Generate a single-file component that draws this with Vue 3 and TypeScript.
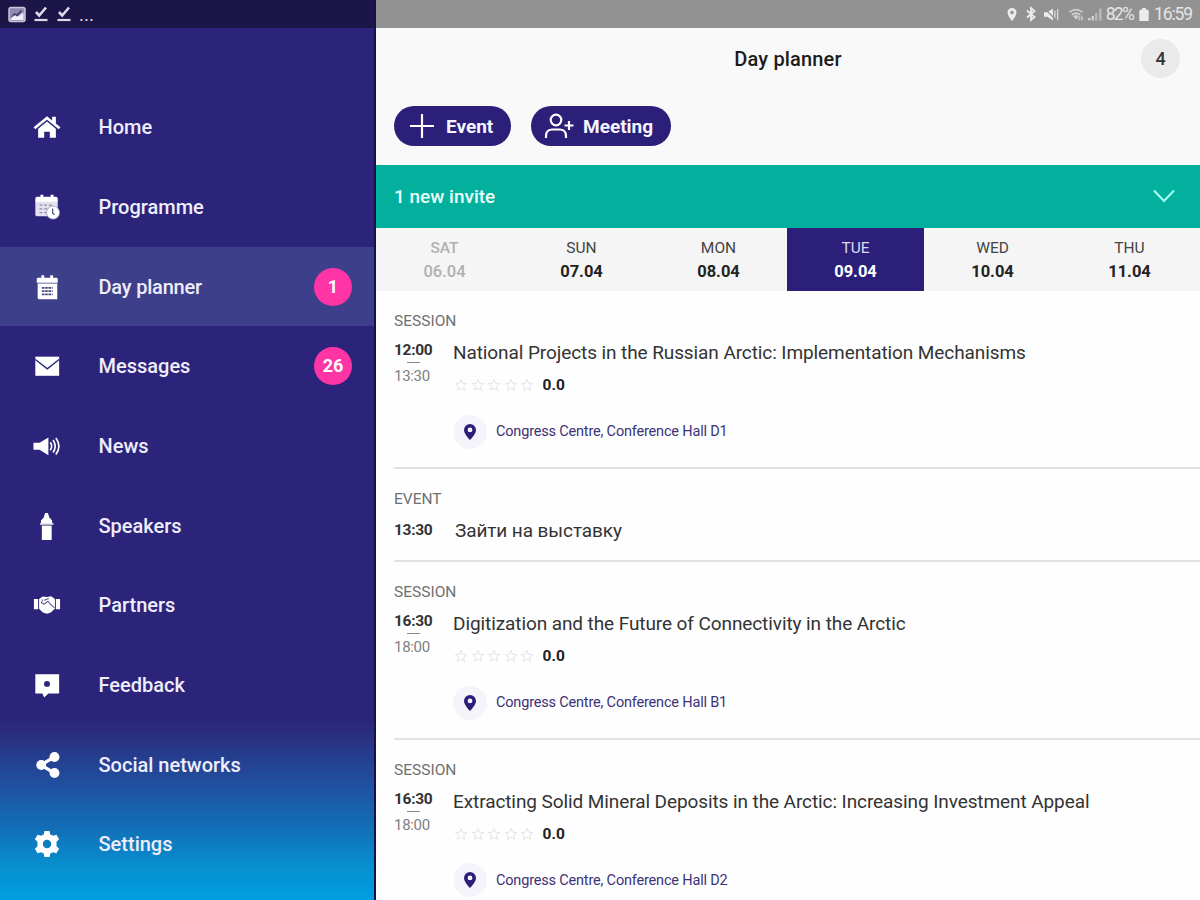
<script setup lang="ts">
interface MenuItem {
  icon: string;
  label: string;
  badge?: number;
  active?: boolean;
}

interface Day {
  name: string;
  date: string;
  state?: "past" | "selected";
}

interface Entry {
  kind: "session" | "event";
  start: string;
  end?: string;
  title: string;
  rating?: string;
  place?: string;
}

const menu: MenuItem[] = [
  { icon: "home", label: "Home" },
  { icon: "programme", label: "Programme" },
  { icon: "planner", label: "Day planner", badge: 1, active: true },
  { icon: "messages", label: "Messages", badge: 26 },
  { icon: "news", label: "News" },
  { icon: "speakers", label: "Speakers" },
  { icon: "partners", label: "Partners" },
  { icon: "feedback", label: "Feedback" },
  { icon: "social", label: "Social networks" },
  { icon: "settings", label: "Settings" }
];

const days: Day[] = [
  { name: "SAT", date: "06.04", state: "past" },
  { name: "SUN", date: "07.04" },
  { name: "MON", date: "08.04" },
  { name: "TUE", date: "09.04", state: "selected" },
  { name: "WED", date: "10.04" },
  { name: "THU", date: "11.04" }
];

const entries: Entry[] = [
  {
    kind: "session",
    start: "12:00",
    end: "13:30",
    title: "National Projects in the Russian Arctic: Implementation Mechanisms",
    rating: "0.0",
    place: "Congress Centre, Conference Hall D1"
  },
  { kind: "event", start: "13:30", title: "Зайти на выставку" },
  {
    kind: "session",
    start: "16:30",
    end: "18:00",
    title: "Digitization and the Future of Connectivity in the Arctic",
    rating: "0.0",
    place: "Congress Centre, Conference Hall B1"
  },
  {
    kind: "session",
    start: "16:30",
    end: "18:00",
    title: "Extracting Solid Mineral Deposits in the Arctic: Increasing Investment Appeal",
    rating: "0.0",
    place: "Congress Centre, Conference Hall D2"
  }
];
</script>

<template>
  <div class="screen">
    <aside class="sidebar">
      <div class="status status-left">
        <svg class="status-image" viewBox="0 0 18 16">
          <rect x="1" y="1" width="16" height="14" rx="2" fill="#8f8bb0" stroke="#c9c6dc" stroke-width="1.5" />
          <path d="M2.5 12.5 7 8.500l3 1.500 5.500-4v7.500h-13z" fill="#f1f0fa" />
          <path d="M3 10.500 6.500 6.500l2 1.500L13 3.500l1 1-5 5.500-2-1.500z" fill="#3d3767" />
        </svg>
        <svg v-for="n in 2" :key="n" class="status-check" viewBox="0 0 14 16">
          <path d="m2 6 3.200 3.500L12 1.500" fill="none" stroke="#dcdaea" stroke-width="2.600" />
          <path d="M.5 14h13" stroke="#dcdaea" stroke-width="2.200" />
        </svg>
        <span class="status-more">...</span>
      </div>

      <nav class="menu">
        <a v-for="item in menu" :key="item.label" class="menu-item" :class="{ active: item.active }">
          <svg class="menu-icon" viewBox="0 0 30 30">
            <g v-if="item.icon === 'home'">
              <path d="M15 9 24.500 17V26.500H18V20h-6v6.500H5.500V17z" />
              <path d="M1.500 16.300 15 5.300l13.500 11" fill="none" stroke="#fff" stroke-width="2.800" />
              <path d="M20.500 4h4v8l-4-3.500z" />
              <path d="M4.500 17.300 15 8.700l10.500 8.600" fill="none" stroke="#5d578f" stroke-width=".7" />
            </g>
            <g v-else-if="item.icon === 'programme'">
              <path d="M4.500 4H8V2h3v2h8V2h3v2h2.500a2 2 0 0 1 2 2v4h-24V6a2 2 0 0 1 2-2z" />
              <path d="M2.500 9.500h24V25h-22a2 2 0 0 1-2-2z" fill="#e3e1ee" />
              <path d="M7 13h3m2 0h3m2 0h3M7 17h3m2 0h3M7 21h3m2 0h3" stroke="#8f8bb0" stroke-width="1.500" />
              <circle cx="21.500" cy="21" r="7" stroke="#8d89b1" stroke-width=".7" />
              <path d="M21 16.500v5l2 2" fill="none" stroke="#4c4687" stroke-width="1.300" />
            </g>
            <g v-else-if="item.icon === 'planner'">
              <path d="M5.500 5H9V2.500h3V5h6.500V2.500h3V5h3.500a1.500 1.500 0 0 1 1.500 1.500V10.500H4V6.500A1.500 1.500 0 0 1 5.500 5zM5 11.300h21V28H6.500A1.500 1.500 0 0 1 5 26.500z" />
              <path d="M9.500 16h11.500M9.500 19.500h11.500M9.500 23h11.500" stroke="#4c4687" stroke-width="1.900" stroke-dasharray="2.800 .7" />
            </g>
            <g v-else-if="item.icon === 'messages'">
              <path d="M2.500 5h25.500v20.500H2.500z" />
              <path d="m2.500 8 12.800 10L28 8" fill="none" stroke="#2c247a" stroke-width="1.500" />
            </g>
            <g v-else-if="item.icon === 'news'">
              <path d="M.5 11.500h7V19h-7zM7 11.500l9.500-5.500v19L7 19z" />
              <path d="M18.500 11q3 4.300 0 8.500M21.500 8.500q4.500 6.800 0 13.500M24.500 6.500q6.500 8.800 0 17.500" fill="none" stroke="#fff" stroke-width="1.800" />
            </g>
            <g v-else-if="item.icon === 'speakers'">
              <path d="M13 1h3l1.500 5 3 3v4h-12V9l3-3zM9.500 14.500h10.500V30H9.500z" />
              <path d="M7.500 12.800h14.500" stroke="#e5e3f0" stroke-width="1.800" />
              <path d="M9 14.200h11.500" stroke="#76709f" stroke-width=".7" />
            </g>
            <g v-else-if="item.icon === 'partners'">
              <path d="M1 8.500h4.500v11H1zM24.500 8.500H29v11h-4.500zM6.500 8.500l4-2.500 4.500.5L19.500 5.500l4 3v10.500l-4.500 4-4 1.500-4.500-1.500-4-4z" />
              <path d="M10.500 9 9 12.500l3 1.500 4-3 2.500 3 4.500 4M17 8l-5 2" fill="none" stroke="#5d578f" stroke-width="1.100" />
            </g>
            <g v-else-if="item.icon === 'feedback'">
              <path d="M2.500 3.500H28v20.500H16.500L12 28.500 10 24H2.500z" />
              <circle cx="15" cy="13.800" r="3.200" fill="#2c247a" />
            </g>
            <g v-else-if="item.icon === 'social'">
              <path d="M22.500 6.500 8.500 15l14 8.500" fill="none" stroke="#fff" stroke-width="3.600" />
              <circle cx="23" cy="6.500" r="5.300" />
              <circle cx="8.800" cy="15" r="5.300" />
              <circle cx="23" cy="23.500" r="5.300" />
            </g>
            <g v-else>
              <path
                fill-rule="evenodd"
                d="M12.300 1h5.400l.8 3.700q1.500.5 2.700 1.400l3.900-1.100 2.900 4.900-2.800 2.600v5l2.800 2.600-2.900 4.900-3.900-1.100q-1.200.9-2.700 1.400l-.8 3.700h-5.400l-.8-3.700q-1.500-.5-2.700-1.400L4.900 25 2 20.100l2.800-2.600v-5L2 9.900 4.900 5l3.900 1.100Q10 5.200 11.500 4.700zM15 10.500a4.500 4.500 0 1 0 0 9 4.500 4.500 0 0 0 0-9z"
              />
            </g>
          </svg>
          <span class="menu-label">{{ item.label }}</span>
          <span v-if="item.badge" class="menu-badge">{{ item.badge }}</span>
        </a>
      </nav>
    </aside>

    <main class="content">
      <div class="status status-right">
        <svg class="status-pin" viewBox="0 0 12 16">
          <path fill-rule="evenodd" d="M6 1a4.800 4.800 0 0 0-4.800 4.800C1.200 9.500 6 15 6 15s4.800-5.500 4.800-9.200A4.800 4.800 0 0 0 6 1zm0 2.900a1.900 1.900 0 1 1 0 3.800 1.900 1.900 0 0 1 0-3.800z" />
        </svg>
        <svg class="status-bluetooth" viewBox="0 0 12 16">
          <path d="m2 4.500 7.500 6.500L6 14V2l3.500 3L2 11.500" fill="none" stroke="#ececec" stroke-width="1.800" />
        </svg>
        <svg class="status-mute" viewBox="0 0 18 16">
          <path d="M1 5.500h3.500l6-4v13l-6-4H1z" />
          <path d="M12.500 4v8M15.500 2v12" stroke="#dcdcdc" stroke-width="1.400" />
          <path d="m2 2 11 11" stroke="#929292" stroke-width="1.400" />
        </svg>
        <svg class="status-wifi" viewBox="0 0 18 16">
          <path d="M1.500 5.500q7-5.500 14 0M4 8.500q4.500-4 9 0" fill="none" stroke="#cfcfcf" stroke-width="1.700" />
          <path d="m6 10 2.500-1.500L11 10l-2.500 3zM12.500 9v5l-1.500-1.500M14.500 9v5l1.500-1.500" stroke="#cfcfcf" stroke-width=".8" fill="#cfcfcf" />
        </svg>
        <svg class="status-signal" viewBox="0 0 16 16">
          <path d="M1 12h2.500v2.500H1zM4.500 10H7v4.500H4.500z" fill="#cfcfcf" />
          <path d="M8 7h2.500v7.500H8zM12 2.500h2.500v12H12z" fill="#b9b9b9" />
        </svg>
        <span class="status-percent">82%</span>
        <svg class="status-battery" viewBox="0 0 10 16">
          <path d="M3 1h4v2h2a1 1 0 0 1 1 1v10a1 1 0 0 1-1 1H1a1 1 0 0 1-1-1V4a1 1 0 0 1 1-1h2z" />
        </svg>
        <span class="status-time">16:59</span>
      </div>

      <header class="header">
        <div class="title-bar">
          <h1 class="title">Day planner</h1>
          <span class="counter">4</span>
        </div>
        <div class="actions">
          <button class="action">
            <svg class="action-icon" viewBox="0 0 24 24">
              <path d="M12 0v24M0 12h24" fill="none" stroke="#fff" stroke-width="2.200" />
            </svg>
            <span>Event</span>
          </button>
          <button class="action action-meeting">
            <svg class="meeting-icon" viewBox="0 0 30 26">
              <g fill="none" stroke="#fff" stroke-width="2.200">
                <circle cx="12" cy="7" r="5.300" />
                <path d="M2 25v-2c0-4 2.500-6.500 6.500-6.500h7c4 0 6.500 2.500 6.500 6.500v2M25 8v9M20.500 12.500h9" />
              </g>
            </svg>
            <span>Meeting</span>
          </button>
        </div>
      </header>

      <div class="invite">
        <span>1 new invite</span>
        <svg class="chevron" viewBox="0 0 22 14">
          <path d="m1 1.500 10 10.500 10-10.500" fill="none" stroke="#a8fff0" stroke-width="2" />
        </svg>
      </div>

      <div class="days">
        <div v-for="day in days" :key="day.date" class="day" :class="day.state">
          <span class="day-name">{{ day.name }}</span>
          <span class="day-date">{{ day.date }}</span>
        </div>
      </div>

      <section class="agenda">
        <article v-for="entry in entries" :key="entry.title" class="entry" :class="entry.kind">
          <div class="entry-kind">{{ entry.kind.toUpperCase() }}</div>
          <div class="entry-row">
            <div class="entry-time">
              <span class="time-start">{{ entry.start }}</span>
              <template v-if="entry.end">
                <span class="time-dash"></span>
                <span class="time-end">{{ entry.end }}</span>
              </template>
            </div>
            <div class="entry-body">
              <h2 class="entry-title">{{ entry.title }}</h2>
              <div v-if="entry.rating" class="rating">
                <svg v-for="n in 5" :key="n" class="star" viewBox="0 0 14 14">
                  <path d="m7 1.500 1.600 3.700 4 .4-3 2.700.9 4L7 10.200l-3.500 2.100.9-4-3-2.700 4-.4z" fill="none" stroke="#e4e4e4" />
                </svg>
                <span class="rating-value">{{ entry.rating }}</span>
              </div>
              <div v-if="entry.place" class="place">
                <span class="place-pin">
                  <svg viewBox="0 0 12 16">
                    <path fill-rule="evenodd" d="M6 0a6 6 0 0 0-6 6c0 4.200 6 10 6 10s6-5.800 6-10a6 6 0 0 0-6-6zm0 3.500A2.400 2.400 0 1 1 6 8.300a2.400 2.400 0 0 1 0-4.800z" />
                  </svg>
                </span>
                <span>{{ entry.place }}</span>
              </div>
            </div>
          </div>
        </article>
      </section>
    </main>
  </div>
</template>

<style>
body {
  margin: 0;
  overflow: hidden;
}
</style>

<style scoped>
.screen {
  display: flex;
  width: 1200px;
  height: 900px;
  overflow: hidden;
  background: #fefefe;
  color: #222;
  font-family: Roboto, "Liberation Sans", sans-serif;
}

svg {
  display: block;
  flex: none;
}

.sidebar {
  box-sizing: border-box;
  flex: none;
  width: 376px;
  border-right: 2px solid #16104f;
  background: linear-gradient(#2c247a 0, #2c247a 718px, #283384 742px, #2050a0 784px, #126fb7 828px, #078fcf 866px, #009fe0 900px);
}

.status {
  display: flex;
  align-items: center;
  box-sizing: border-box;
  height: 28px;
}

.status-left {
  padding-left: 8px;
  background: #1c1547;
}

.status-image {
  width: 18px;
  height: 17px;
}

.status-check {
  width: 14px;
  height: 16px;
  margin-left: 8px;
}

.status-check + .status-check {
  margin-left: 9px;
}

.status-more {
  margin: 0 0 -1px 8px;
  color: #dcdaea;
  font-size: 19px;
  line-height: 24px;
}

.menu {
  padding-top: 59.3px;
}

.menu-item {
  display: flex;
  align-items: center;
  box-sizing: border-box;
  height: 79.7px;
  padding: 0 22px 0 33px;
  color: #eeedfb;
}

.menu-item.active {
  background: #3e3f8a;
}

.menu-icon {
  width: 28px;
  height: 28px;
  fill: #fff;
}

.menu-label {
  flex: 1;
  margin-left: 37.5px;
  font-size: 20px;
  font-weight: 500;
}

.active .menu-label {
  letter-spacing: -0.2px;
}

.menu-badge {
  width: 38px;
  height: 38px;
  border-radius: 50%;
  background: #ff35a5;
  color: #fff;
  font-size: 18px;
  font-weight: 700;
  line-height: 38px;
  text-align: center;
}

.content {
  flex: 1;
  min-width: 0;
}

.status-right {
  justify-content: flex-end;
  padding-right: 8px;
  background: #929292;
  color: #e6e6e6;
  fill: #ececec;
  font-size: 17.5px;
}

.status-pin {
  width: 12px;
  height: 15px;
}

.status-bluetooth {
  width: 12px;
  height: 16px;
  margin-left: 7px;
}

.status-mute {
  width: 17px;
  height: 15px;
  margin-left: 6px;
}

.status-wifi {
  width: 17px;
  height: 15px;
  margin-left: 8px;
}

.status-signal {
  width: 16px;
  height: 16px;
  margin-left: 2px;
}

.status-percent {
  margin-left: 3px;
  letter-spacing: -1.8px;
}

.status-battery {
  width: 10px;
  height: 15px;
  margin: 0 5px 0 6px;
}

.status-time {
  letter-spacing: -1.1px;
}

.header {
  box-sizing: border-box;
  height: 136.5px;
  background: #f9f9f9;
}

.title-bar {
  display: grid;
  grid-template-columns: 1fr auto 1fr;
  align-items: center;
  height: 60px;
  padding: 0 20px;
}

.title {
  grid-column: 2;
  margin: 2px 0 0;
  color: #1c1c1c;
  font-size: 20px;
  font-weight: 500;
  letter-spacing: 0.15px;
}

.counter {
  justify-self: end;
  width: 39px;
  height: 39px;
  border-radius: 50%;
  background: #eaeaea;
  color: #333;
  font-size: 18px;
  font-weight: 500;
  line-height: 39px;
  text-align: center;
}

.actions {
  display: flex;
  gap: 20px;
  padding: 18px 0 0 18px;
}

.action {
  display: flex;
  align-items: center;
  gap: 12px;
  box-sizing: border-box;
  width: 117px;
  height: 40px;
  border: 0;
  border-radius: 20px;
  padding: 0 0 0 16px;
  background: #2b1f7a;
  color: #f5f4ff;
  font: inherit;
  font-size: 19px;
  font-weight: 700;
}

.action-meeting {
  gap: 9px;
  width: 140px;
  padding-left: 13px;
}

.action-icon {
  width: 24px;
  height: 24px;
}

.meeting-icon {
  width: 30px;
  height: 26px;
}

.invite {
  display: flex;
  align-items: center;
  justify-content: space-between;
  box-sizing: border-box;
  height: 63px;
  padding: 0 25px 0 18px;
  background: #03b09e;
  color: #eafffb;
  font-size: 19px;
  font-weight: 500;
}

.chevron {
  width: 22px;
  height: 14px;
}

.days {
  display: grid;
  grid-template-columns: repeat(6, 137px);
  height: 63.5px;
  background: #f5f5f5;
}

.day {
  display: flex;
  flex-direction: column;
  align-items: center;
  padding-top: 9px;
  color: #444;
  line-height: 23px;
}

.day-name {
  font-size: 15.5px;
}

.day-date {
  color: #222;
  font-size: 16.5px;
  font-weight: 700;
}

.day.past,
.day.past .day-date {
  color: #b0b0b0;
  font-weight: 500;
}

.day.selected {
  background: #2b1f7a;
  color: #dcdaf2;
}

.day.selected .day-date {
  color: #fff;
}

.agenda {
  padding-left: 18px;
}

.entry {
  box-sizing: border-box;
  height: 177.5px;
  padding-top: 18px;
  border-bottom: 2px solid #e2e2e2;
}

.entry.event {
  height: 93.5px;
}

.entry-kind {
  color: #707070;
  font-size: 15.5px;
  line-height: 24px;
}

.entry-row {
  display: grid;
  grid-template-columns: 59px 1fr;
}

.entry-time {
  display: flex;
  flex-direction: column;
  align-items: flex-start;
  padding-top: 7px;
  line-height: 20px;
}

.event .entry-time {
  padding-top: 9px;
}

.time-start {
  color: #333;
  font-size: 15.5px;
  font-weight: 700;
  letter-spacing: -0.3px;
}

.time-dash {
  width: 13px;
  height: 1px;
  margin: 2px 0 3px 13px;
  background: #888;
}

.time-end {
  color: #808080;
  font-size: 15px;
  letter-spacing: -0.3px;
}

.entry-body {
  padding-top: 8px;
}

.entry-title {
  margin: 0;
  color: #333;
  font-size: 19px;
  font-weight: 400;
  letter-spacing: -0.09px;
  line-height: 24px;
  white-space: nowrap;
}

.event .entry-title {
  padding-left: 2px;
}

.rating {
  display: flex;
  align-items: center;
  gap: 2.5px;
  height: 20px;
  margin-top: 10px;
  padding-left: 1px;
}

.star {
  width: 14px;
  height: 14px;
}

.rating-value {
  margin-left: 6px;
  font-size: 15.5px;
  font-weight: 700;
}

.place {
  display: flex;
  align-items: center;
  gap: 9px;
  margin-top: 19.5px;
  color: #3b3277;
  font-size: 14.5px;
  letter-spacing: -0.18px;
}

.place-pin {
  display: flex;
  align-items: center;
  justify-content: center;
  width: 34px;
  height: 34px;
  border-radius: 50%;
  background: #f5f4fb;
}

.place-pin svg {
  width: 12px;
  height: 16px;
  fill: #2b1f7a;
}
</style>
